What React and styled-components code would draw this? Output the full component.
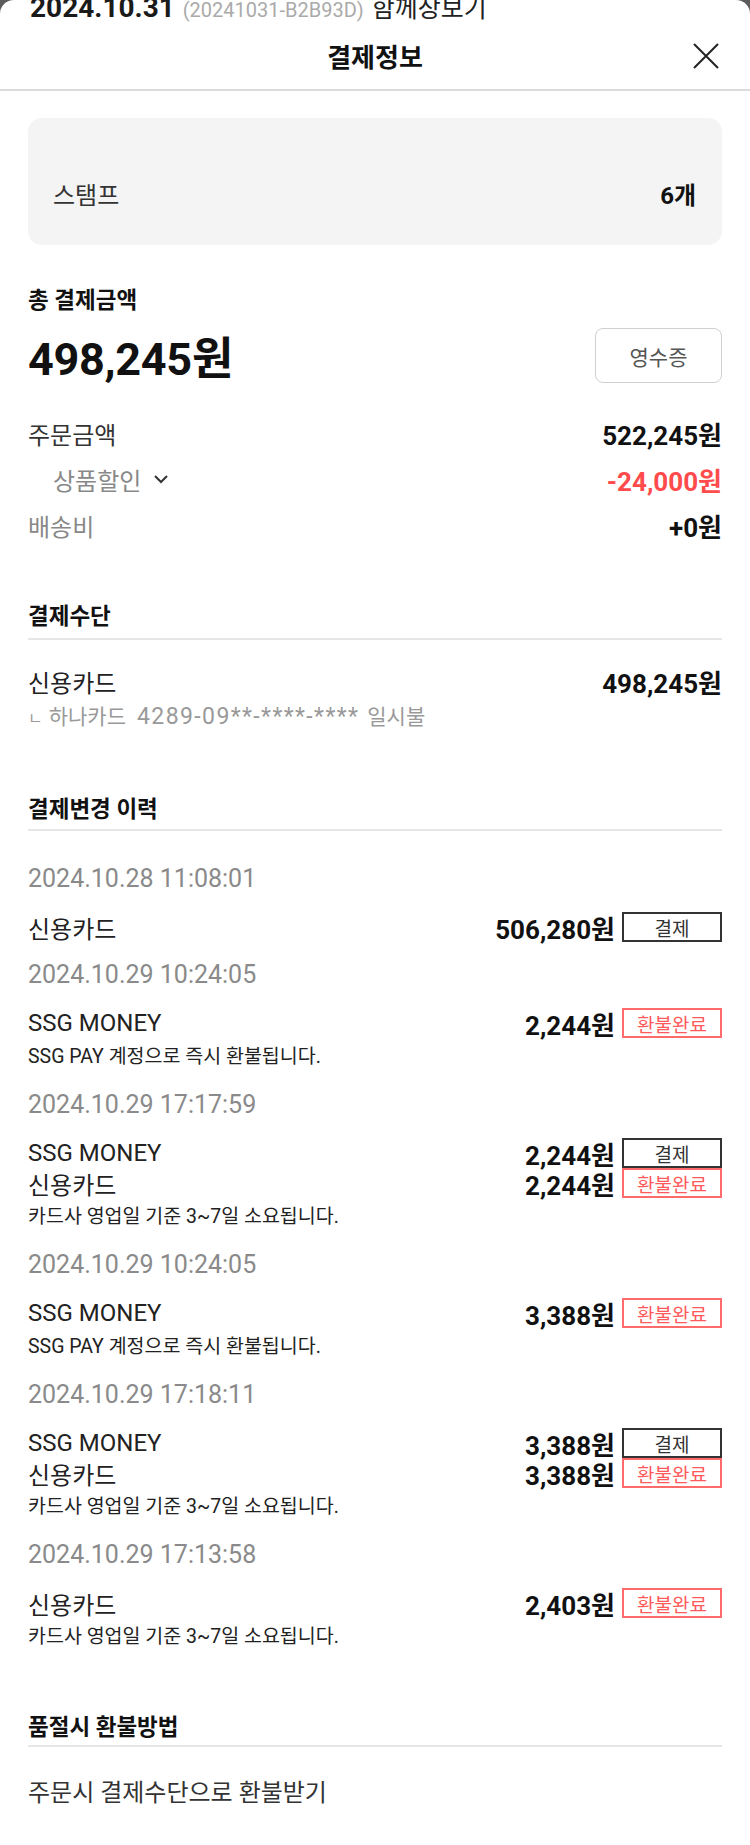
import styled, { createGlobalStyle } from "styled-components";

const GlobalStyle = createGlobalStyle`
  * {
    box-sizing: border-box;
  }
  body {
    margin: 0;
    background: #5c5c5c;
    font-family: Roboto, "Noto Sans CJK KR", sans-serif;
    color: #222;
  }
`;

const Sheet = styled.div`
  min-height: 100vh;
  background: #fff;
  border-radius: 14px 14px 0 0;
  overflow: hidden;
`;

const BehindBar = styled.div`
  height: 22px;
  padding: 0 30px;
  overflow: hidden;
`;

const BehindLine = styled.div`
  display: flex;
  align-items: baseline;
  gap: 8px;
  margin-top: -6px;
  line-height: 28px;
  white-space: nowrap;
`;

const OrderDate = styled.span`
  font-size: 28px;
  font-weight: 700;
  color: #1a1a1a;
`;

const OrderNo = styled.span`
  font-size: 20px;
  color: #aaa;
`;

const ShareLink = styled.span`
  font-size: 25px;
  color: #222;
`;

const Header = styled.header`
  height: 69px;
  display: grid;
  grid-template-columns: 1fr auto 1fr;
  align-items: center;
  padding: 0 30px;
  border-bottom: 2px solid #dcdcdc;
`;

const Title = styled.h1`
  grid-column: 2;
  margin: 0;
  font-size: 26px;
  font-weight: 700;
  color: #111;
`;

const CloseButton = styled.button`
  justify-self: end;
  display: flex;
  padding: 0;
  border: 0;
  background: none;
  color: #222;
`;

const Content = styled.main`
  padding: 27px 28px 52px;
`;

const StampBox = styled.div`
  display: flex;
  justify-content: space-between;
  padding: 63px 26px 34px 25px;
  border-radius: 14px;
  background: #f4f4f4;
  font-size: 24px;
  line-height: 30px;
  color: #333;
  & b {
    color: #111;
  }
`;

const SectionTitle = styled.h2`
  margin: ${(p) => p.$top}px 0 0;
  padding-bottom: ${(p) => (p.$line ? p.$gap ?? 7 : 0)}px;
  border-bottom: ${(p) => (p.$line ? "2px solid #e6e6e6" : "0")};
  font-size: 22.5px;
  font-weight: 700;
  line-height: 30px;
  color: #111;
`;

const TotalRow = styled.div`
  display: flex;
  justify-content: space-between;
  align-items: center;
  height: 55px;
  margin-top: 13px;
`;

const TotalAmount = styled.strong`
  font-size: 45px;
  font-weight: 700;
  color: #111;
  letter-spacing: -0.3px;
`;

const ReceiptButton = styled.button`
  width: 127px;
  height: 55px;
  border: 1px solid #cfcfcf;
  border-radius: 8px;
  background: #fff;
  font-family: inherit;
  font-size: 21px;
  color: #555;
`;

const Summary = styled.div`
  margin-top: 27px;
`;

const SummaryRow = styled.div`
  display: flex;
  justify-content: space-between;
  align-items: center;
  height: 46px;
  padding-left: ${(p) => (p.$indent ? 25 : 0)}px;
`;

const SummaryLabel = styled.span`
  display: flex;
  align-items: center;
  gap: 12px;
  font-size: 24px;
  color: ${(p) => p.$color || "#333"};
`;

const Amount = styled.span`
  font-size: 26px;
  font-weight: 700;
  color: ${(p) => p.$color || "#111"};
`;

const MethodRow = styled.div`
  display: flex;
  justify-content: space-between;
  align-items: center;
  height: 30px;
  margin-top: 26px;
`;

const MethodLabel = styled.span`
  font-size: 24px;
  color: #222;
`;

const CardInfo = styled.div`
  margin-top: 6px;
  line-height: 30px;
  font-size: 21px;
  color: #999;
  white-space: nowrap;
`;

const Corner = styled.span`
  margin-right: 6px;
  font-size: 16px;
`;

const CardNo = styled.span`
  margin: 0 8px 0 11px;
  font-size: 23px;
  letter-spacing: 1.4px;
`;

const History = styled.div`
  display: flex;
  flex-direction: column;
  gap: 18px;
  margin-top: 33px;
`;

const DateText = styled.div`
  margin-bottom: 18px;
  font-size: 25px;
  line-height: 30px;
  color: #8a8a8a;
`;

const Entry = styled.div`
  display: flex;
  align-items: center;
  height: 30px;
`;

const EntryMethod = styled(MethodLabel)`
  flex: 1;
`;

const Badge = styled.span`
  display: inline-flex;
  align-items: center;
  justify-content: center;
  width: 100px;
  height: 30px;
  margin-left: 7px;
  border: 2px solid ${(p) => (p.$refund ? "#ff6b6b" : "#333")};
  font-size: 19px;
  color: ${(p) => (p.$refund ? "#ff5a5a" : "#333")};
`;

const Note = styled.div`
  margin-top: 4px;
  font-size: 19.5px;
  line-height: 30px;
  color: #222;
`;

const RefundText = styled.p`
  margin: 31px 0 0;
  font-size: 24px;
  line-height: 30px;
  color: #333;
`;

const SSG_NOTE = "SSG PAY 계정으로 즉시 환불됩니다.";
const CARD_NOTE = "카드사 영업일 기준 3~7일 소요됩니다.";

const history = [
  {
    date: "2024.10.28 11:08:01",
    items: [{ method: "신용카드", amount: "506,280원", refund: false }],
  },
  {
    date: "2024.10.29 10:24:05",
    items: [{ method: "SSG MONEY", amount: "2,244원", refund: true }],
    note: SSG_NOTE,
  },
  {
    date: "2024.10.29 17:17:59",
    items: [
      { method: "SSG MONEY", amount: "2,244원", refund: false },
      { method: "신용카드", amount: "2,244원", refund: true },
    ],
    note: CARD_NOTE,
  },
  {
    date: "2024.10.29 10:24:05",
    items: [{ method: "SSG MONEY", amount: "3,388원", refund: true }],
    note: SSG_NOTE,
  },
  {
    date: "2024.10.29 17:18:11",
    items: [
      { method: "SSG MONEY", amount: "3,388원", refund: false },
      { method: "신용카드", amount: "3,388원", refund: true },
    ],
    note: CARD_NOTE,
  },
  {
    date: "2024.10.29 17:13:58",
    items: [{ method: "신용카드", amount: "2,403원", refund: true }],
    note: CARD_NOTE,
  },
];

const CloseIcon = () => (
  <svg width="28" height="28" viewBox="0 0 28 28" fill="none">
    <path d="M2 2L26 26M26 2L2 26" stroke="currentColor" strokeWidth="2" />
  </svg>
);

const ChevronDown = () => (
  <svg width="16" height="10" viewBox="0 0 16 10" fill="none">
    <path d="M2 2l6 6 6-6" stroke="#333" strokeWidth="2" />
  </svg>
);

export default function App() {
  return (
    <>
      <GlobalStyle />
      <Sheet>
        <BehindBar>
          <BehindLine>
            <OrderDate>2024.10.31</OrderDate>
            <OrderNo>(20241031-B2B93D)</OrderNo>
            <ShareLink>함께장보기</ShareLink>
          </BehindLine>
        </BehindBar>

        <Header>
          <Title>결제정보</Title>
          <CloseButton aria-label="닫기">
            <CloseIcon />
          </CloseButton>
        </Header>

        <Content>
          <StampBox>
            <span>스탬프</span>
            <b>6개</b>
          </StampBox>

          <SectionTitle $top={40}>총 결제금액</SectionTitle>
          <TotalRow>
            <TotalAmount>498,245원</TotalAmount>
            <ReceiptButton>영수증</ReceiptButton>
          </TotalRow>

          <Summary>
            <SummaryRow>
              <SummaryLabel>주문금액</SummaryLabel>
              <Amount>522,245원</Amount>
            </SummaryRow>
            <SummaryRow $indent>
              <SummaryLabel $color="#888">
                상품할인 <ChevronDown />
              </SummaryLabel>
              <Amount $color="#ff4b4b">-24,000원</Amount>
            </SummaryRow>
            <SummaryRow>
              <SummaryLabel $color="#888">배송비</SummaryLabel>
              <Amount>+0원</Amount>
            </SummaryRow>
          </Summary>

          <SectionTitle $top={53} $line>
            결제수단
          </SectionTitle>
          <MethodRow>
            <MethodLabel>신용카드</MethodLabel>
            <Amount>498,245원</Amount>
          </MethodRow>
          <CardInfo>
            <Corner>ㄴ</Corner>하나카드<CardNo>4289-09**-****-****</CardNo>일시불
          </CardInfo>

          <SectionTitle $top={60} $line $gap={5}>
            결제변경 이력
          </SectionTitle>
          <History>
            {history.map((h, i) => (
              <div key={i}>
                <DateText>{h.date}</DateText>
                {h.items.map((it, j) => (
                  <Entry key={j}>
                    <EntryMethod>{it.method}</EntryMethod>
                    <Amount>{it.amount}</Amount>
                    <Badge $refund={it.refund}>{it.refund ? "환불완료" : "결제"}</Badge>
                  </Entry>
                ))}
                {h.note && <Note>{h.note}</Note>}
              </div>
            ))}
          </History>

          <SectionTitle $top={60} $line $gap={3}>
            품절시 환불방법
          </SectionTitle>
          <RefundText>주문시 결제수단으로 환불받기</RefundText>
        </Content>
      </Sheet>
    </>
  );
}
